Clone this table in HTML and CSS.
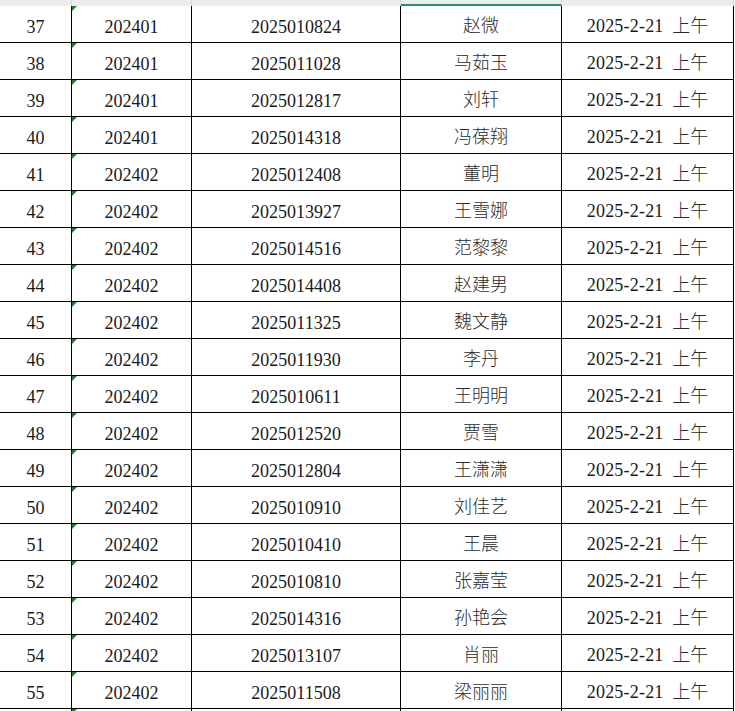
FILE: index.html
```html
<!DOCTYPE html>
<html lang="zh">
<head>
<meta charset="utf-8">
<link rel="stylesheet" href="styles.css">
</head>
<body>
<div class="sheet">
  <div class="hdr"><span></span><span></span><span></span><span class="sel"></span><span></span></div>
  <div class="row"><div class="c c1">37</div><div class="c c2 tri">202401</div><div class="c c3">2025010824</div><div class="c c4 cn">赵微</div><div class="c c5"><span>2025-2-21 <span class="cn">上午</span></span></div></div>
  <div class="row"><div class="c c1">38</div><div class="c c2 tri">202401</div><div class="c c3">2025011028</div><div class="c c4 cn">马茹玉</div><div class="c c5"><span>2025-2-21 <span class="cn">上午</span></span></div></div>
  <div class="row"><div class="c c1">39</div><div class="c c2 tri">202401</div><div class="c c3">2025012817</div><div class="c c4 cn">刘轩</div><div class="c c5"><span>2025-2-21 <span class="cn">上午</span></span></div></div>
  <div class="row"><div class="c c1">40</div><div class="c c2 tri">202401</div><div class="c c3">2025014318</div><div class="c c4 cn">冯葆翔</div><div class="c c5"><span>2025-2-21 <span class="cn">上午</span></span></div></div>
  <div class="row"><div class="c c1">41</div><div class="c c2 tri">202402</div><div class="c c3">2025012408</div><div class="c c4 cn">董明</div><div class="c c5"><span>2025-2-21 <span class="cn">上午</span></span></div></div>
  <div class="row"><div class="c c1">42</div><div class="c c2 tri">202402</div><div class="c c3">2025013927</div><div class="c c4 cn">王雪娜</div><div class="c c5"><span>2025-2-21 <span class="cn">上午</span></span></div></div>
  <div class="row"><div class="c c1">43</div><div class="c c2 tri">202402</div><div class="c c3">2025014516</div><div class="c c4 cn">范黎黎</div><div class="c c5"><span>2025-2-21 <span class="cn">上午</span></span></div></div>
  <div class="row"><div class="c c1">44</div><div class="c c2 tri">202402</div><div class="c c3">2025014408</div><div class="c c4 cn">赵建男</div><div class="c c5"><span>2025-2-21 <span class="cn">上午</span></span></div></div>
  <div class="row"><div class="c c1">45</div><div class="c c2 tri">202402</div><div class="c c3">2025011325</div><div class="c c4 cn">魏文静</div><div class="c c5"><span>2025-2-21 <span class="cn">上午</span></span></div></div>
  <div class="row"><div class="c c1">46</div><div class="c c2 tri">202402</div><div class="c c3">2025011930</div><div class="c c4 cn">李丹</div><div class="c c5"><span>2025-2-21 <span class="cn">上午</span></span></div></div>
  <div class="row"><div class="c c1">47</div><div class="c c2 tri">202402</div><div class="c c3">2025010611</div><div class="c c4 cn">王明明</div><div class="c c5"><span>2025-2-21 <span class="cn">上午</span></span></div></div>
  <div class="row"><div class="c c1">48</div><div class="c c2 tri">202402</div><div class="c c3">2025012520</div><div class="c c4 cn">贾雪</div><div class="c c5"><span>2025-2-21 <span class="cn">上午</span></span></div></div>
  <div class="row"><div class="c c1">49</div><div class="c c2 tri">202402</div><div class="c c3">2025012804</div><div class="c c4 cn">王潇潇</div><div class="c c5"><span>2025-2-21 <span class="cn">上午</span></span></div></div>
  <div class="row"><div class="c c1">50</div><div class="c c2 tri">202402</div><div class="c c3">2025010910</div><div class="c c4 cn">刘佳艺</div><div class="c c5"><span>2025-2-21 <span class="cn">上午</span></span></div></div>
  <div class="row"><div class="c c1">51</div><div class="c c2 tri">202402</div><div class="c c3">2025010410</div><div class="c c4 cn">王晨</div><div class="c c5"><span>2025-2-21 <span class="cn">上午</span></span></div></div>
  <div class="row"><div class="c c1">52</div><div class="c c2 tri">202402</div><div class="c c3">2025010810</div><div class="c c4 cn">张嘉莹</div><div class="c c5"><span>2025-2-21 <span class="cn">上午</span></span></div></div>
  <div class="row"><div class="c c1">53</div><div class="c c2 tri">202402</div><div class="c c3">2025014316</div><div class="c c4 cn">孙艳会</div><div class="c c5"><span>2025-2-21 <span class="cn">上午</span></span></div></div>
  <div class="row"><div class="c c1">54</div><div class="c c2 tri">202402</div><div class="c c3">2025013107</div><div class="c c4 cn">肖丽</div><div class="c c5"><span>2025-2-21 <span class="cn">上午</span></span></div></div>
  <div class="row"><div class="c c1">55</div><div class="c c2 tri">202402</div><div class="c c3">2025011508</div><div class="c c4 cn">梁丽丽</div><div class="c c5"><span>2025-2-21 <span class="cn">上午</span></span></div></div>
  <div class="row"><div class="c c1"></div><div class="c c2 tri"></div><div class="c c3"></div><div class="c c4 cn"></div><div class="c c5"></div></div>
</div>
</body>
</html>
```
FILE: styles.css
```css
html, body {
  margin: 0;
  padding: 0;
  background: #ffffff;
  overflow: hidden;
  height: 711px;
}
.sheet {
  width: 735px;
  font-family: "Liberation Serif", "Noto Sans CJK SC", serif;
  font-size: 18px;
  color: #1a1a1a;
}
.hdr, .row {
  display: grid;
  grid-template-columns: 72px 120px 209px 161px 172px;
}
.hdr {
  height: 6px;
  background: #ececec;
}
.hdr span {
  box-sizing: border-box;
  border-right: 1px solid #d6d6d6;
}
.hdr span.sel {
  border-bottom: 2px solid #21926b;
}
.row {
  height: 37px;
}
.c {
  box-sizing: border-box;
  border-right: 1px solid #000;
  border-bottom: 1px solid #000;
  display: flex;
  align-items: center;
  justify-content: center;
  padding-top: 6px;
  line-height: 20px;
  white-space: pre;
  position: relative;
}
.cn {
  font-family: "Noto Sans CJK SC", sans-serif;
  font-weight: 300;
  color: #2b2b2b;
}
.c4 {
  padding-top: 0;
  padding-bottom: 1px;
}
.c5 {
  padding-top: 2px;
  letter-spacing: 0.2px;
}
.c5 .cn {
  margin-left: 4px;
  letter-spacing: 0;
}
.tri::before {
  content: "";
  position: absolute;
  left: 0;
  top: 0;
  width: 0;
  height: 0;
  border-top: 5px solid #1d7f2a;
  border-right: 5px solid transparent;
}
```
